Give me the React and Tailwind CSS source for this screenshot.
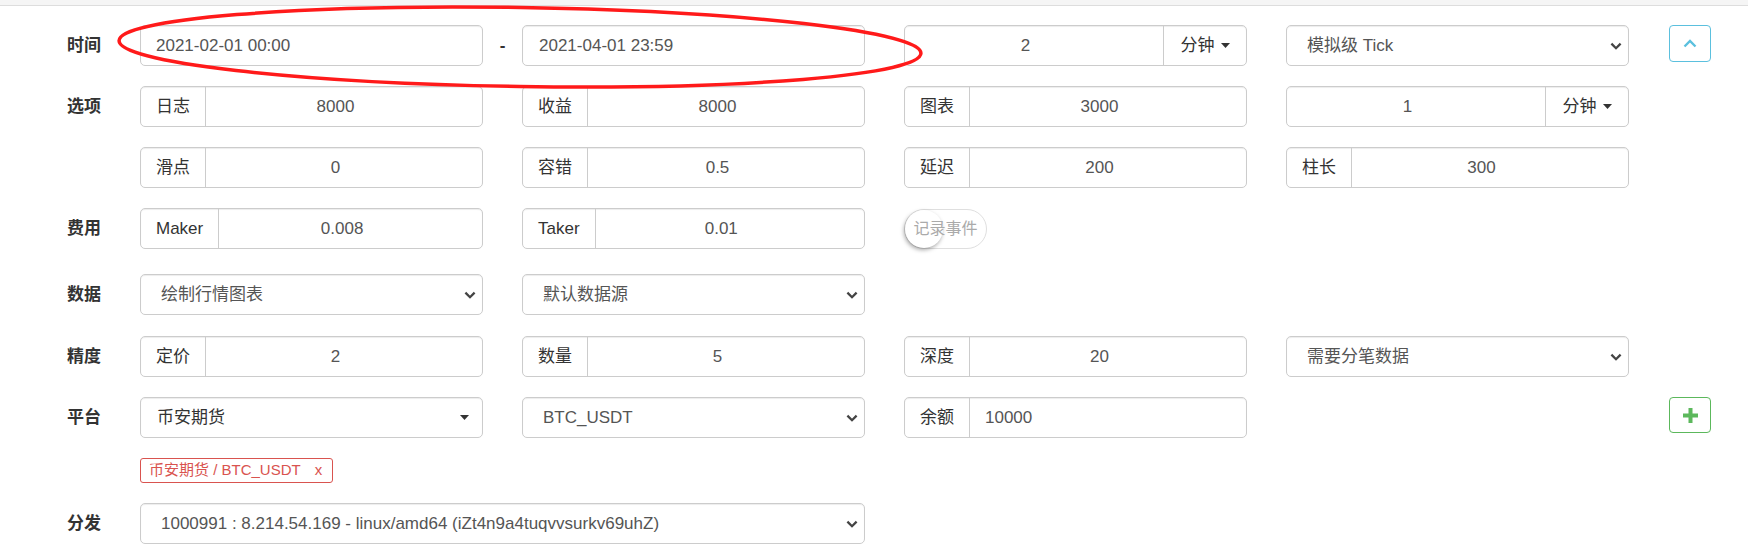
const box = 'rounded-[5px] border border-[#ccc] bg-white shadow-[inset_0_1px_1px_rgba(0,0,0,0.075)]'

function Label({ children }) {
  return <div className="w-[140px] shrink-0 pl-[67px] text-[17px] font-bold text-[#333]">{children}</div>
}

function Gap({ children }) {
  return <div className="flex w-[39px] shrink-0 justify-center font-bold text-[#333]">{children}</div>
}

function Chevron() {
  return (
    <svg width="12" height="8" viewBox="0 0 12 8" className="shrink-0">
      <path d="M1.4 1.6 6 6.2l4.6-4.6" fill="none" stroke="#444" strokeWidth="2.3" />
    </svg>
  )
}

function Caret() {
  return (
    <svg width="9" height="5" viewBox="0 0 9 5" className="shrink-0">
      <path d="M0 0h9L4.5 5z" fill="#333" />
    </svg>
  )
}

function AddonInput({ addon, value, left }) {
  return (
    <div className={`flex h-[41px] w-[343px] shrink-0 overflow-hidden ${box}`}>
      <span className="flex items-center border-r border-[#ccc] px-[15px] text-[#333]">{addon}</span>
      <span
        className={
          left
            ? 'flex flex-1 items-center pl-[15px] text-[#555]'
            : 'flex flex-1 items-center justify-center pr-[17px] text-[#555]'
        }
      >
        {value}
      </span>
    </div>
  )
}

function Select({ text, wide }) {
  return (
    <div
      className={`flex h-[41px] ${wide ? 'w-[725px]' : 'w-[343px]'} shrink-0 items-center justify-between pl-[20px] pr-[6px] text-[#555] ${box}`}
    >
      <span>{text}</span>
      <Chevron />
    </div>
  )
}

function UnitInput({ value }) {
  return (
    <div className={`flex h-[41px] w-[343px] shrink-0 overflow-hidden ${box}`}>
      <span className="flex flex-1 items-center justify-center pr-[17px] text-[#555]">{value}</span>
      <span className="flex w-[83px] items-center justify-center gap-[6px] border-l border-[#ccc] text-[#333]">
        分钟
        <Caret />
      </span>
    </div>
  )
}

function Cell() {
  return <div className="w-[343px] shrink-0" />
}

function Row({ label, children, className = '' }) {
  return (
    <div className={`flex h-[41px] items-center ${className}`}>
      <Label>{label}</Label>
      {children}
    </div>
  )
}

export default function App() {
  return (
    <div className="relative h-[556px] w-full overflow-hidden bg-white font-['Liberation_Sans','Noto_Sans_CJK_SC',sans-serif] text-[17px]">
      <div className="h-[6px] border-b border-[#ddd] bg-[#f5f5f5]" />

      <div className="pt-[19px]">
        <Row label="时间" className="mb-[20px]">
          <div className={`flex h-[41px] w-[343px] shrink-0 items-center pl-[15px] text-[#555] ${box}`}>
            2021-02-01 00:00
          </div>
          <Gap>-</Gap>
          <div className={`flex h-[41px] w-[343px] shrink-0 items-center pl-[16px] text-[#555] ${box}`}>
            2021-04-01 23:59
          </div>
          <Gap />
          <UnitInput value="2" />
          <Gap />
          <Select text="模拟级 Tick" />
          <button className="ml-[40px] flex h-[37px] w-[42px] items-center justify-center self-start rounded-[4px] border border-[#5bc0de] bg-white">
            <svg width="14" height="9" viewBox="0 0 14 9">
              <path d="M1.5 7.5 7 2l5.5 5.5" fill="none" stroke="#5bc0de" strokeWidth="2.4" />
            </svg>
          </button>
        </Row>

        <Row label="选项" className="mb-[20px]">
          <AddonInput addon="日志" value="8000" />
          <Gap />
          <AddonInput addon="收益" value="8000" />
          <Gap />
          <AddonInput addon="图表" value="3000" />
          <Gap />
          <UnitInput value="1" />
        </Row>

        <Row label="" className="mb-[20px]">
          <AddonInput addon="滑点" value="0" />
          <Gap />
          <AddonInput addon="容错" value="0.5" />
          <Gap />
          <AddonInput addon="延迟" value="200" />
          <Gap />
          <AddonInput addon="柱长" value="300" />
        </Row>

        <Row label="费用" className="mb-[25px]">
          <AddonInput addon="Maker" value="0.008" />
          <Gap />
          <AddonInput addon="Taker" value="0.01" />
          <Gap />
          <div className="relative h-[40px] w-[83px] shrink-0 rounded-full border border-[#dfdfdf] bg-white">
            <span className="absolute left-0 top-0 h-[38px] w-[38px] rounded-full bg-white shadow-[-1px_2px_4px_rgba(0,0,0,0.35)]" />
            <span className="absolute inset-0 flex items-center justify-center text-[16px] text-[#aaa]">记录事件</span>
          </div>
        </Row>

        <Row label="数据" className="mb-[21px]">
          <Select text="绘制行情图表" />
          <Gap />
          <Select text="默认数据源" />
        </Row>

        <Row label="精度" className="mb-[20px]">
          <AddonInput addon="定价" value="2" />
          <Gap />
          <AddonInput addon="数量" value="5" />
          <Gap />
          <AddonInput addon="深度" value="20" />
          <Gap />
          <Select text="需要分笔数据" />
        </Row>

        <Row label="平台" className="mb-[20px]">
          <div className={`flex h-[41px] w-[343px] shrink-0 items-center justify-between pl-[16px] pr-[13px] text-[#333] ${box}`}>
            <span>币安期货</span>
            <Caret />
          </div>
          <Gap />
          <Select text="BTC_USDT" />
          <Gap />
          <AddonInput addon="余额" value="10000" left />
          <Gap />
          <Cell />
          <button className="ml-[40px] flex h-[36px] w-[42px] items-center justify-center self-start rounded-[4px] border border-[#5cb85c] bg-white">
            <svg width="15" height="15" viewBox="0 0 15 15">
              <path d="M5.5 0h4v5.5H15v4H9.5V15h-4V9.5H0v-4h5.5z" fill="#5cb85c" />
            </svg>
          </button>
        </Row>

        <div className="mb-[20px] flex h-[25px] pl-[140px]">
          <span className="inline-flex items-center rounded-[3px] border border-[#d9534f] pl-[8px] pr-[10px] text-[15px] text-[#d9534f]">
            币安期货 / BTC_USDT
            <span className="ml-[14px]">x</span>
          </span>
        </div>

        <Row label="分发">
          <Select text="1000991 : 8.214.54.169 - linux/amd64 (iZt4n9a4tuqvvsurkv69uhZ)" wide />
        </Row>
      </div>

      <svg className="pointer-events-none absolute left-0 top-0" width="1748" height="556">
        <ellipse
          cx="520"
          cy="47"
          rx="401"
          ry="39.5"
          transform="rotate(0.9 520 47)"
          fill="none"
          stroke="#ff1a1a"
          strokeWidth="3.5"
        />
      </svg>
    </div>
  )
}
